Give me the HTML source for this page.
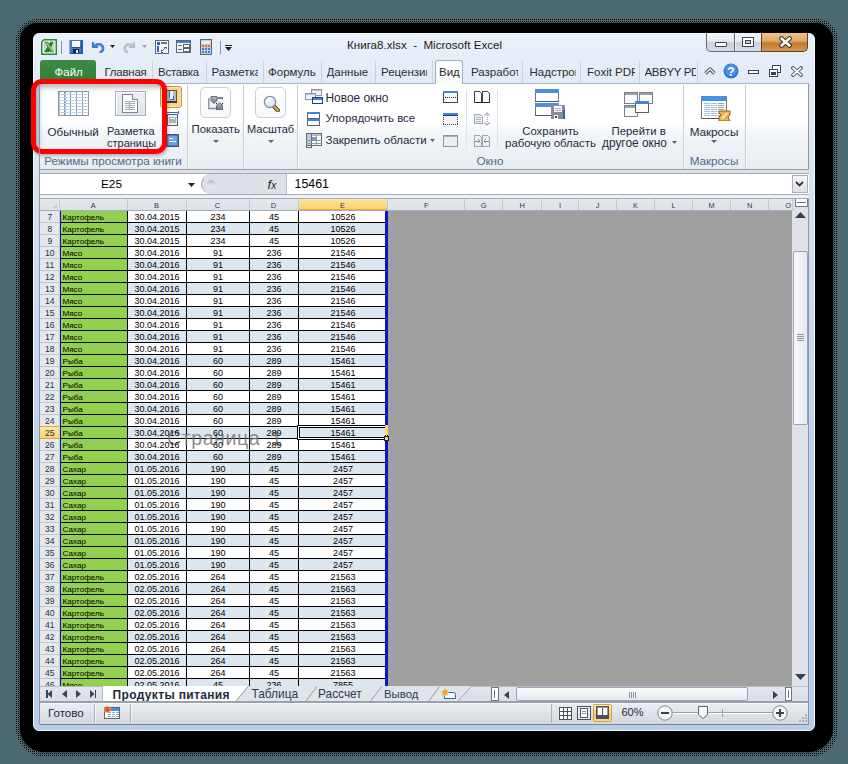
<!DOCTYPE html><html><head><meta charset="utf-8"><style>

*{box-sizing:border-box;margin:0;padding:0}
html,body{width:848px;height:764px;overflow:hidden}
body{position:relative;background:#4c6870;font-family:"Liberation Sans",sans-serif;color:#1e395b}
.ab{position:absolute}
.t{position:absolute;white-space:pre;line-height:1}

</style></head><body>
<svg class="ab" style="left:16px;top:19px" width="822" height="738" shape-rendering="crispEdges"><defs><pattern id="dots" width="2" height="2" patternUnits="userSpaceOnUse"><rect x="0" y="0" width="1" height="1" fill="#000"/></pattern><pattern id="chk" width="2" height="2" patternUnits="userSpaceOnUse"><rect x="0" y="0" width="1" height="1" fill="#000"/><rect x="1" y="1" width="1" height="1" fill="#000"/></pattern></defs><path d="M21 0H801A21 21 0 0 1 822 21V710A28 28 0 0 1 794 738H28A28 28 0 0 1 0 710V21A21 21 0 0 1 21 0Z" fill="url(#dots)" shape-rendering="geometricPrecision"/><path d="M21 2H799A19 19 0 0 1 818 21V708A26 26 0 0 1 792 734H30A26 26 0 0 1 2 708V21A19 19 0 0 1 21 2Z" fill="url(#chk)" opacity="0.5" shape-rendering="geometricPrecision"/></svg>
<div class="ab" style="left:20px;top:23px;width:813px;height:729px;border-radius:17px 17px 24px 24px;background:#000"></div>
<div class="ab" style="left:33px;top:33px;width:782px;height:698px;border-radius:6px;background:linear-gradient(#e9f0f9,#e0eaf6 8%,#cadcf0 35%,#bcd3eb 60%,#b7cee9);border:1px solid #f4f8fc"></div>
<svg class="ab" style="left:41px;top:39px" width="16" height="16" viewBox="0 0 16 16"><defs><linearGradient id="xg" x1="0" y1="0" x2="1" y2="0"><stop offset="0" stop-color="#c4c7ca"/><stop offset=".5" stop-color="#f4f4f4"/><stop offset="1" stop-color="#bfc2c5"/></linearGradient></defs><path d="M3 0.75H15.25V15.25H0.75V3Z" fill="#fff" stroke="#2b8a2e" stroke-width="1.5"/><rect x="2.6" y="2.6" width="10.8" height="10.8" fill="url(#xg)"/><path d="M3.5 2.8H7L13 13.2H9.5Z" fill="#1f7f2a"/><path d="M12.5 2.8H9.5L3.2 13.2H8.2Z" fill="#1f7f2a"/><path d="M5.3 3.5L12 12.6" stroke="#8edb4c" stroke-width="1.7"/></svg>
<div class="ab" style="left:61px;top:41px;width:1px;height:13px;background:#8a97a8"></div>
<svg class="ab" style="left:69px;top:40px" width="14" height="14" viewBox="0 0 14 14" shape-rendering="crispEdges"><rect x="0" y="0" width="14" height="14" fill="#3d7ad6"/><rect x="0" y="0" width="1" height="14" fill="#9aa6b6"/><rect x="12" y="0" width="2" height="14" fill="#2a5cb0"/><rect x="1" y="13" width="13" height="1" fill="#24509e"/><rect x="3" y="1" width="8" height="6" fill="#f6f8fb"/><rect x="3" y="7" width="9" height="1" fill="#1f4a9a"/><rect x="4" y="9" width="6" height="4" fill="#1b1d22"/><rect x="7" y="10" width="2" height="3" fill="#e6ecf3"/></svg>
<svg class="ab" style="left:91px;top:41px" width="14" height="12" viewBox="0 0 14 12"><path d="M2 1v5h5" fill="none" stroke="#3b7fd6" stroke-width="2.2"/><path d="M3 5.5C5 2.5 11 2 12 6.5c.6 3-1.5 4.5-3.5 5" fill="none" stroke="#3b7fd6" stroke-width="2.6"/></svg>
<svg class="ab" style="left:110px;top:45px" width="5" height="3" viewBox="0 0 5 3" shape-rendering="crispEdges"><path d="M0 0h5l-2.5 3z" fill="#202020" shape-rendering="geometricPrecision"/></svg>
<svg class="ab" style="left:123px;top:41px" width="13" height="12" viewBox="0 0 13 12"><path d="M11 1v5H6" fill="none" stroke="#b8bfc8" stroke-width="2.2"/><path d="M10 5.5C8 2.5 3 2 2 6.5c-.6 3 1.3 4.5 3 5" fill="none" stroke="#b8bfc8" stroke-width="2.6"/></svg>
<svg class="ab" style="left:142px;top:45px" width="5" height="3" viewBox="0 0 5 3" shape-rendering="crispEdges"><path d="M0 0h5l-2.5 3z" fill="#9aa3ad" shape-rendering="geometricPrecision"/></svg>
<svg class="ab" style="left:155px;top:40px" width="14" height="14" viewBox="0 0 14 14" shape-rendering="crispEdges"><rect x="0.5" y="0.5" width="13" height="13" fill="#f6f8fb" stroke="#5d6672"/><rect x="2" y="2" width="3" height="3" fill="#2f63b5"/><rect x="6" y="2" width="6" height="2" fill="#6c7682"/><rect x="2" y="6" width="2" height="6" fill="#2f63b5"/><path d="M6 12l5-5M9 7h2v2M6 10v2h2" stroke="#5d6672" fill="none"/></svg>
<svg class="ab" style="left:176px;top:40px" width="15" height="13" viewBox="0 0 15 13" shape-rendering="crispEdges"><rect x="0.5" y="0.5" width="14" height="12" fill="#f6f8fb" stroke="#5d6672"/><rect x="1" y="1" width="13" height="2" fill="#3f7fd0"/><rect x="2" y="5" width="4" height="1" fill="#5d6672"/><rect x="7" y="4" width="6" height="3" fill="#fff" stroke="#5d6672" stroke-width="1"/><rect x="2" y="9" width="4" height="1" fill="#5d6672"/><rect x="7" y="8" width="6" height="3" fill="#fff" stroke="#5d6672"/></svg>
<svg class="ab" style="left:200px;top:39px" width="12" height="16" viewBox="0 0 12 16" shape-rendering="crispEdges"><rect x="0.5" y="0.5" width="11" height="15" rx="1" fill="#c5ced8" stroke="#5b6572"/><rect x="2" y="2" width="8" height="3" fill="#e9eef4"/><rect x="2" y="6" width="2" height="2" fill="#e8662a"/><rect x="5" y="6" width="2" height="2" fill="#e8662a"/><rect x="8" y="6" width="2" height="2" fill="#e8662a"/><rect x="2" y="9" width="2" height="2" fill="#3b7fd6"/><rect x="5" y="9" width="2" height="2" fill="#3b7fd6"/><rect x="8" y="9" width="2" height="2" fill="#3b7fd6"/><rect x="2" y="12" width="2" height="2" fill="#3b7fd6"/><rect x="5" y="12" width="2" height="2" fill="#3b7fd6"/><rect x="8" y="12" width="2" height="2" fill="#3b7fd6"/></svg>
<div class="ab" style="left:220px;top:41px;width:1px;height:13px;background:#8a97a8"></div>
<svg class="ab" style="left:225px;top:44px" width="8" height="8" viewBox="0 0 8 8" shape-rendering="crispEdges"><rect x="0" y="1" width="7" height="1" fill="#202020"/><path d="M0 3h7l-3.5 4z" fill="#202020" shape-rendering="geometricPrecision"/></svg>
<div class="t" style="left:347px;top:39px;font-size:11.6px;color:#1a1a1a;font-weight:normal;">Книга8.xlsx  -  Microsoft Excel</div>
<div class="ab" style="left:706px;top:33px;width:56px;height:19px;border:1px solid #5e6a78;border-top:none;border-radius:0 0 0 5px;background:linear-gradient(#f2f5f9,#e6ebf1 45%,#c9d1db 55%,#d5dce4)"></div>
<div class="ab" style="left:734px;top:33px;width:1px;height:18px;background:#5e6a78"></div>
<div class="ab" style="left:735px;top:33px;width:1px;height:18px;background:rgba(255,255,255,.6)"></div>
<div class="ab" style="left:761px;top:33px;width:47px;height:19px;border:1px solid #6a3e1a;border-top:none;border-radius:0 0 5px 0;background:linear-gradient(#eec48c,#e3a860 45%,#c27b32 55%,#d49650)"></div>
<div class="ab" style="left:715px;top:42px;width:12px;height:5px;background:#fff;border:1px solid #3a4350;border-radius:1px"></div>
<svg class="ab" style="left:742px;top:37px" width="12" height="10" viewBox="0 0 12 10" shape-rendering="crispEdges"><rect x="0.5" y="0.5" width="11" height="9" fill="#fff" stroke="#3a4350"/><rect x="3.5" y="3.5" width="5" height="3" fill="#c9d0d8" stroke="#3a4350"/></svg>
<svg class="ab" style="left:779px;top:36px" width="13" height="12" viewBox="0 0 13 12"><path d="M2.5 2.5l8 7M10.5 2.5l-8 7" stroke="#3a3028" stroke-width="4.6" stroke-linecap="round"/><path d="M2.5 2.5l8 7M10.5 2.5l-8 7" stroke="#fff" stroke-width="2.6" stroke-linecap="round"/></svg>
<div class="ab" style="left:40px;top:60px;width:56px;height:24px;border-radius:3px 3px 0 0;background:linear-gradient(#3c8c45,#2e7d38)"></div>
<div class="t" style="left:54.5px;top:66.5px;font-size:11.5px;color:#fff;font-weight:normal;">Файл</div>
<div class="ab" style="left:104.5px;top:62px;width:60px;height:20px;overflow:hidden">
<div class="t" style="left:0;top:5px;font-size:11.5px;color:#2d2d2d;letter-spacing:-0.25px">Главная</div></div>
<div class="ab" style="left:152px;top:61px;width:1px;height:22px;background:#c9d3df"></div>
<div class="ab" style="left:158px;top:62px;width:60px;height:20px;overflow:hidden">
<div class="t" style="left:0;top:5px;font-size:11.5px;color:#2d2d2d;letter-spacing:-0.25px">Вставка</div></div>
<div class="ab" style="left:205.5px;top:61px;width:1px;height:22px;background:#c9d3df"></div>
<div class="ab" style="left:211.5px;top:62px;width:46.5px;height:20px;overflow:hidden">
<div class="t" style="left:0;top:5px;font-size:11.5px;color:#2d2d2d;letter-spacing:0">Разметка</div></div>
<div class="ab" style="left:263px;top:61px;width:1px;height:22px;background:#c9d3df"></div>
<div class="ab" style="left:268px;top:62px;width:48px;height:20px;overflow:hidden">
<div class="t" style="left:0;top:5px;font-size:11.5px;color:#2d2d2d;letter-spacing:0">Формулы</div></div>
<div class="ab" style="left:321px;top:61px;width:1px;height:22px;background:#c9d3df"></div>
<div class="ab" style="left:326.5px;top:62px;width:43.5px;height:20px;overflow:hidden">
<div class="t" style="left:0;top:5px;font-size:11.5px;color:#2d2d2d;letter-spacing:0">Данные</div></div>
<div class="ab" style="left:375px;top:61px;width:1px;height:22px;background:#c9d3df"></div>
<div class="ab" style="left:381px;top:62px;width:46px;height:20px;overflow:hidden">
<div class="t" style="left:0;top:5px;font-size:11.5px;color:#2d2d2d;letter-spacing:0">Рецензии</div></div>
<div class="ab" style="left:432px;top:61px;width:1px;height:22px;background:#c9d3df"></div>
<div class="ab" style="left:435px;top:60px;width:28px;height:24px;border:1px solid #9eacbd;border-bottom:none;border-radius:3px 3px 0 0;background:linear-gradient(#fff,#f9fbfd)"></div>
<div class="t" style="left:439px;top:67px;font-size:11.5px;color:#2d2d2d;font-weight:normal;">Вид</div>
<div class="ab" style="left:471px;top:62px;width:47px;height:20px;overflow:hidden">
<div class="t" style="left:0;top:5px;font-size:11.5px;color:#2d2d2d;letter-spacing:0">Разработчик</div></div>
<div class="ab" style="left:522px;top:61px;width:1px;height:22px;background:#c9d3df"></div>
<div class="ab" style="left:529.5px;top:62px;width:46.5px;height:20px;overflow:hidden">
<div class="t" style="left:0;top:5px;font-size:11.5px;color:#2d2d2d;letter-spacing:0">Надстройки</div></div>
<div class="ab" style="left:580px;top:61px;width:1px;height:22px;background:#c9d3df"></div>
<div class="ab" style="left:587px;top:62px;width:47.5px;height:20px;overflow:hidden">
<div class="t" style="left:0;top:5px;font-size:11.5px;color:#2d2d2d;letter-spacing:0">Foxit PDF</div></div>
<div class="ab" style="left:638.5px;top:61px;width:1px;height:22px;background:#c9d3df"></div>
<div class="ab" style="left:644.5px;top:62px;width:51.0px;height:20px;overflow:hidden">
<div class="t" style="left:0;top:5px;font-size:11.5px;color:#2d2d2d;letter-spacing:-0.35px">ABBYY PDF</div></div>
<div class="ab" style="left:696.5px;top:61px;width:1px;height:22px;background:#c9d3df"></div>
<svg class="ab" style="left:704px;top:67px" width="12" height="8" viewBox="0 0 12 8"><path d="M1.5 6.5l4.5-4.5 4.5 4.5" fill="none" stroke="#3a4350" stroke-width="3.2" stroke-linejoin="round"/><path d="M1.5 6.5l4.5-4.5 4.5 4.5" fill="none" stroke="#fff" stroke-width="1.3"/></svg>
<svg class="ab" style="left:723px;top:63px" width="16" height="16" viewBox="0 0 16 16"><circle cx="8" cy="8" r="7.5" fill="#2f76d2"/><circle cx="8" cy="7" r="6" fill="#4a90e2"/><text x="8" y="12.5" font-size="12" font-weight="bold" text-anchor="middle" fill="#fff" font-family="Liberation Sans">?</text></svg>
<div class="ab" style="left:748px;top:70px;width:11px;height:4px;background:#fff;border:1px solid #3a4350"></div>
<svg class="ab" style="left:769px;top:65px" width="12" height="12" viewBox="0 0 12 12" shape-rendering="crispEdges"><rect x="3.5" y="0.5" width="8" height="7" fill="#fff" stroke="#3a4350"/><rect x="0.5" y="4.5" width="8" height="7" fill="#fff" stroke="#3a4350"/><rect x="2" y="7" width="5" height="3" fill="#3a4350"/></svg>
<svg class="ab" style="left:791px;top:66px" width="12" height="11" viewBox="0 0 12 11"><path d="M2 2l8 7M10 2l-8 7" stroke="#3a4350" stroke-width="3.6" stroke-linecap="round"/><path d="M2 2l8 7M10 2l-8 7" stroke="#fff" stroke-width="1.8" stroke-linecap="round"/></svg>
<div class="ab" style="left:39px;top:83px;width:770px;height:87px;border:1px solid #a9b6c6;border-bottom:1px solid #96a0ac;background:linear-gradient(#ffffff,#ffffff 44%,#f3f5f8 58%,#edf0f4 78%,#e8ecf1)"></div>
<div class="ab" style="left:436px;top:83px;width:26px;height:1px;background:#fff"></div>
<div class="ab" style="left:186.5px;top:85px;width:1px;height:84px;background:#c5ccd5"></div>
<div class="ab" style="left:187.5px;top:86px;width:1px;height:82px;background:rgba(255,255,255,.8)"></div>
<div class="ab" style="left:242.5px;top:85px;width:1px;height:84px;background:#c5ccd5"></div>
<div class="ab" style="left:243.5px;top:86px;width:1px;height:82px;background:rgba(255,255,255,.8)"></div>
<div class="ab" style="left:297px;top:85px;width:1px;height:84px;background:#c5ccd5"></div>
<div class="ab" style="left:298px;top:86px;width:1px;height:82px;background:rgba(255,255,255,.8)"></div>
<div class="ab" style="left:682.5px;top:85px;width:1px;height:84px;background:#c5ccd5"></div>
<div class="ab" style="left:683.5px;top:86px;width:1px;height:82px;background:rgba(255,255,255,.8)"></div>
<div class="ab" style="left:745px;top:85px;width:1px;height:84px;background:#c5ccd5"></div>
<div class="ab" style="left:746px;top:86px;width:1px;height:82px;background:rgba(255,255,255,.8)"></div>
<div class="ab" style="left:466px;top:90px;width:1px;height:58px;background:#dde3ea"></div>
<div class="ab" style="left:497px;top:90px;width:1px;height:58px;background:#dde3ea"></div>
<div class="t" style="left:13.0px;top:155px;width:200px;text-align:center;font-size:11.7px;color:#4e6a8e;font-weight:normal;">Режимы просмотра книги</div>
<div class="t" style="left:390.0px;top:155px;width:200px;text-align:center;font-size:11.7px;color:#4e6a8e;font-weight:normal;">Окно</div>
<div class="t" style="left:614.0px;top:155px;width:200px;text-align:center;font-size:11.7px;color:#4e6a8e;font-weight:normal;">Макросы</div>
<svg class="ab" style="left:58px;top:91px" width="31" height="25" viewBox="0 0 31 25" shape-rendering="crispEdges"><rect x="0" y="0" width="31" height="25" fill="#8e98a6"/><rect x="1" y="1" width="5" height="2" fill="#fff"/><rect x="7" y="1" width="5" height="2" fill="#fff"/><rect x="13" y="1" width="5" height="2" fill="#fff"/><rect x="19" y="1" width="5" height="2" fill="#fff"/><rect x="25" y="1" width="5" height="2" fill="#fff"/><rect x="1" y="4" width="5" height="2" fill="#fff"/><rect x="7" y="4" width="5" height="2" fill="#fff"/><rect x="13" y="4" width="5" height="2" fill="#fff"/><rect x="19" y="4" width="5" height="2" fill="#fff"/><rect x="25" y="4" width="5" height="2" fill="#fff"/><rect x="1" y="7" width="5" height="2" fill="#fff"/><rect x="7" y="7" width="5" height="2" fill="#fff"/><rect x="13" y="7" width="5" height="2" fill="#fff"/><rect x="19" y="7" width="5" height="2" fill="#fff"/><rect x="25" y="7" width="5" height="2" fill="#fff"/><rect x="1" y="10" width="5" height="2" fill="#fff"/><rect x="7" y="10" width="5" height="2" fill="#fff"/><rect x="13" y="10" width="5" height="2" fill="#fff"/><rect x="19" y="10" width="5" height="2" fill="#fff"/><rect x="25" y="10" width="5" height="2" fill="#fff"/><rect x="1" y="13" width="5" height="2" fill="#fff"/><rect x="7" y="13" width="5" height="2" fill="#fff"/><rect x="13" y="13" width="5" height="2" fill="#fff"/><rect x="19" y="13" width="5" height="2" fill="#fff"/><rect x="25" y="13" width="5" height="2" fill="#fff"/><rect x="1" y="16" width="5" height="2" fill="#fff"/><rect x="7" y="16" width="5" height="2" fill="#fff"/><rect x="13" y="16" width="5" height="2" fill="#fff"/><rect x="19" y="16" width="5" height="2" fill="#fff"/><rect x="25" y="16" width="5" height="2" fill="#fff"/><rect x="1" y="19" width="5" height="2" fill="#fff"/><rect x="7" y="19" width="5" height="2" fill="#fff"/><rect x="13" y="19" width="5" height="2" fill="#fff"/><rect x="19" y="19" width="5" height="2" fill="#fff"/><rect x="25" y="19" width="5" height="2" fill="#fff"/><rect x="1" y="22" width="5" height="2" fill="#fff"/><rect x="7" y="22" width="5" height="2" fill="#fff"/><rect x="13" y="22" width="5" height="2" fill="#fff"/><rect x="19" y="22" width="5" height="2" fill="#fff"/><rect x="25" y="22" width="5" height="2" fill="#fff"/><rect x="1" y="1" width="1" height="23" fill="#9cc0e8"/><rect x="7" y="1" width="1" height="23" fill="#9cc0e8"/><rect x="1" y="3" width="29" height="1" fill="#b8d3f0"/><rect x="1" y="6" width="29" height="1" fill="#b8d3f0"/><rect x="1" y="9" width="29" height="1" fill="#b8d3f0"/><rect x="1" y="12" width="29" height="1" fill="#b8d3f0"/><rect x="1" y="15" width="29" height="1" fill="#b8d3f0"/><rect x="1" y="18" width="29" height="1" fill="#b8d3f0"/><rect x="1" y="21" width="29" height="1" fill="#b8d3f0"/></svg>
<div class="ab" style="left:115px;top:91px;width:31px;height:25px;border:1px solid #a9b1bb;background:linear-gradient(#eef1f4,#dfe4ea);box-shadow:inset 1px 1px 0 #fff"></div>
<svg class="ab" style="left:122px;top:94px" width="16" height="19" viewBox="0 0 16 19" shape-rendering="crispEdges"><path d="M0.5 0.5h10l5 5v13h-15z" fill="#fbfcfd" stroke="#7c8591"/><path d="M10.5 0.5v5h5" fill="#e1e5ea" stroke="#7c8591"/><rect x="3" y="7" width="10" height="1" fill="#a2aab4"/><rect x="3" y="9" width="10" height="1" fill="#a2aab4"/><rect x="3" y="11" width="10" height="1" fill="#a2aab4"/><rect x="3" y="13" width="10" height="1" fill="#a2aab4"/><rect x="3" y="15" width="10" height="1" fill="#a2aab4"/><rect x="7" y="7" width="1" height="9" fill="#a2aab4"/></svg>
<div class="t" style="left:47.5px;top:125.5px;font-size:11.6px;color:#1f2b3d;font-weight:normal;">Обычный</div>
<div class="t" style="left:107px;top:125.5px;font-size:11px;color:#1f2b3d;font-weight:normal;">Разметка</div>
<div class="t" style="left:107px;top:138px;font-size:11px;color:#1f2b3d;font-weight:normal;">страницы</div>
<div class="ab" style="left:160px;top:86px;width:22px;height:21.5px;border:1px solid #c99448;border-radius:3px;background:#fdd57c;box-shadow:inset 0 0 0 1px #fee4a6"></div>
<svg class="ab" style="left:166px;top:90px" width="11" height="13" viewBox="0 0 11 13" shape-rendering="crispEdges"><rect x="0" y="0" width="11" height="13" fill="#4e5664"/><rect x="1" y="1" width="9" height="10" fill="#b4bcc6"/><rect x="4" y="1" width="3" height="9" fill="#f4f7fa"/><rect x="3" y="1" width="1" height="7" fill="#2c64c8"/><rect x="7" y="6" width="1" height="4" fill="#2c64c8"/><rect x="4" y="9" width="3" height="1" fill="#2c64c8"/><rect x="1" y="11" width="10" height="2" fill="#343b46"/></svg>
<svg class="ab" style="left:166px;top:111px" width="13" height="15" viewBox="0 0 13 15" shape-rendering="crispEdges"><rect x="0" y="0" width="1" height="3" fill="#2c6bd0"/><rect x="12" y="0" width="1" height="3" fill="#2c6bd0"/><rect x="0" y="1" width="13" height="1" fill="#2c6bd0"/><rect x="1.5" y="3.5" width="10" height="11" fill="#eef1f4" stroke="#59616c"/><rect x="3" y="6" width="7" height="6" fill="#aab2bc"/><rect x="4" y="7" width="5" height="1" fill="#fff"/></svg>
<svg class="ab" style="left:166px;top:134px" width="13" height="13" viewBox="0 0 13 13" shape-rendering="crispEdges"><rect x="0.5" y="0.5" width="12" height="12" fill="#3f7fd0" stroke="#4a525e"/><rect x="2" y="2" width="9" height="9" fill="#6aa2e6"/><rect x="3" y="4" width="4" height="1" fill="#fff"/><rect x="3" y="7" width="7" height="1" fill="#fff"/></svg>
<div class="ab" style="left:200px;top:87px;width:31px;height:31px;border:1.3px solid #c9d0d8;border-radius:5px;background:linear-gradient(#fff,#f6f8fa)"></div>
<svg class="ab" style="left:208px;top:96px" width="15" height="14" viewBox="0 0 15 14"><defs><linearGradient id="sh" x1="0" y1="0" x2="0" y2="1"><stop offset="0" stop-color="#b8bcc2"/><stop offset="1" stop-color="#6e747c"/></linearGradient></defs><rect x="1" y="1" width="14" height="11" fill="#eef3fa"/><path d="M0.8 2v10.5H9" fill="none" stroke="#8a9099" stroke-width="1.4"/><path d="M3 0.5h6v4l-3 3-3-3z" fill="url(#sh)" stroke="#5f656d" stroke-width="0.9"/><rect x="9.5" y="1" width="5.5" height="2" fill="#7a8088"/><path d="M8.5 13.8v-3.8l3.2-3.2 3.2 3.2v3.8z" fill="url(#sh)" stroke="#4f555d" stroke-width="0.9"/><rect x="8" y="7" width="1" height="1.2" fill="#222"/><rect x="14" y="7" width="1" height="1.2" fill="#222"/></svg>
<div class="t" style="left:191.5px;top:123.5px;font-size:11.4px;color:#1f2b3d;font-weight:normal;">Показать</div>
<svg class="ab" style="left:213px;top:140px" width="6" height="3" viewBox="0 0 6 3" shape-rendering="crispEdges"><path d="M0 0h6l-3 3z" fill="#5a6470" shape-rendering="geometricPrecision"/></svg>
<div class="ab" style="left:255px;top:87px;width:31px;height:31px;border:1.3px solid #c9d0d8;border-radius:5px;background:linear-gradient(#fff,#f6f8fa)"></div>
<svg class="ab" style="left:262px;top:94px" width="18" height="18" viewBox="0 0 18 18"><defs><linearGradient id="lg" x1="0" y1="0" x2="1" y2="1"><stop offset="0" stop-color="#ffffff"/><stop offset="1" stop-color="#c9def4"/></linearGradient></defs><path d="M12 12.5l3.8 3.8" stroke="#3a3020" stroke-width="4" stroke-linecap="square"/><path d="M12 12.5l3.8 3.8" stroke="#e0a838" stroke-width="2.4" stroke-linecap="square"/><circle cx="8" cy="8" r="5.6" fill="url(#lg)" stroke="#858b94" stroke-width="1.3"/></svg>
<div class="t" style="left:247px;top:123.5px;font-size:11px;color:#1f2b3d;font-weight:normal;">Масштаб</div>
<svg class="ab" style="left:268px;top:140px" width="6" height="3" viewBox="0 0 6 3" shape-rendering="crispEdges"><path d="M0 0h6l-3 3z" fill="#5a6470" shape-rendering="geometricPrecision"/></svg>
<svg class="ab" style="left:305px;top:89px" width="18" height="15" viewBox="0 0 18 15" shape-rendering="crispEdges"><rect x="6.5" y="0.5" width="10" height="6" fill="#f2f4f6" stroke="#8e96a0"/><rect x="7" y="1" width="9" height="1" fill="#b9c0c8"/><rect x="0.5" y="4.5" width="10" height="6" fill="#eef3f9" stroke="#8e96a0"/><rect x="1" y="5" width="9" height="1" fill="#a9c6ea"/><rect x="7.5" y="8.5" width="10" height="6" fill="#fff" stroke="#1d3f7a"/><rect x="8" y="9" width="9" height="2" fill="#3f86e0"/></svg>
<div class="t" style="left:325.5px;top:92.6px;font-size:11.9px;color:#1f2b3d;font-weight:normal;">Новое окно</div>
<svg class="ab" style="left:307px;top:112px" width="13" height="14" viewBox="0 0 13 14" shape-rendering="crispEdges"><rect x="0.5" y="0.5" width="12" height="6" fill="#fff" stroke="#59616c"/><rect x="0" y="0" width="13" height="2" fill="#3f86e0"/><rect x="0.5" y="7.5" width="12" height="6" fill="#fff" stroke="#59616c"/><rect x="0" y="7" width="13" height="2" fill="#3f86e0"/></svg>
<div class="t" style="left:325.5px;top:112.7px;font-size:11.5px;color:#1f2b3d;font-weight:normal;">Упорядочить все</div>
<svg class="ab" style="left:306px;top:133px" width="16" height="15" viewBox="0 0 16 15" shape-rendering="crispEdges"><rect x="0.5" y="0.5" width="15" height="12" fill="#fff" stroke="#5f6772"/><rect x="1" y="1" width="14" height="2" fill="#b9c0c8"/><rect x="1" y="1" width="4" height="11" fill="#c7ccd3"/><rect x="6" y="4" width="4" height="3" fill="#6a9ee0"/><rect x="5" y="0" width="1" height="13" fill="#5f6772"/><rect x="10" y="0" width="1" height="13" fill="#8e96a0"/><rect x="0" y="7" width="16" height="1" fill="#8e96a0"/><rect x="0" y="10" width="16" height="1" fill="#8e96a0"/><rect x="0.5" y="12.5" width="5" height="2" fill="#fff" stroke="#5f6772"/></svg>
<div class="t" style="left:325.5px;top:134.5px;font-size:11.5px;color:#1f2b3d;font-weight:normal;">Закрепить области</div>
<svg class="ab" style="left:430px;top:139px" width="5" height="3" viewBox="0 0 5 3" shape-rendering="crispEdges"><path d="M0 0h5l-2.5 3z" fill="#5a6470" shape-rendering="geometricPrecision"/></svg>
<svg class="ab" style="left:443px;top:91px" width="15" height="12" viewBox="0 0 15 12" shape-rendering="crispEdges"><rect x="0.5" y="0.5" width="14" height="11" fill="#f7f9fb" stroke="#3d4550"/><rect x="0" y="0" width="15" height="2" fill="#3f86e0"/><rect x="2" y="6" width="1" height="1" fill="#1d2530"/><rect x="4" y="6" width="1" height="1" fill="#1d2530"/><rect x="6" y="6" width="1" height="1" fill="#1d2530"/><rect x="8" y="6" width="1" height="1" fill="#1d2530"/><rect x="10" y="6" width="1" height="1" fill="#1d2530"/><rect x="12" y="6" width="1" height="1" fill="#1d2530"/></svg>
<svg class="ab" style="left:443px;top:113px" width="15" height="12" viewBox="0 0 15 12" shape-rendering="crispEdges"><rect x="1" y="2" width="13" height="9" fill="#f3f5f8"/><rect x="0" y="0" width="15" height="3" fill="#3f86e0"/><rect x="0" y="2" width="15" height="1" fill="#1d3f7a"/><rect x="0" y="11" width="1" height="1" fill="#3d4550"/><rect x="2" y="11" width="1" height="1" fill="#3d4550"/><rect x="4" y="11" width="1" height="1" fill="#3d4550"/><rect x="6" y="11" width="1" height="1" fill="#3d4550"/><rect x="8" y="11" width="1" height="1" fill="#3d4550"/><rect x="10" y="11" width="1" height="1" fill="#3d4550"/><rect x="12" y="11" width="1" height="1" fill="#3d4550"/><rect x="14" y="11" width="1" height="1" fill="#3d4550"/><rect x="0" y="4" width="1" height="1" fill="#3d4550"/><rect x="14" y="4" width="1" height="1" fill="#3d4550"/><rect x="0" y="6" width="1" height="1" fill="#3d4550"/><rect x="14" y="6" width="1" height="1" fill="#3d4550"/><rect x="0" y="8" width="1" height="1" fill="#3d4550"/><rect x="14" y="8" width="1" height="1" fill="#3d4550"/><rect x="0" y="10" width="1" height="1" fill="#3d4550"/><rect x="14" y="10" width="1" height="1" fill="#3d4550"/></svg>
<svg class="ab" style="left:443px;top:135px" width="15" height="12" viewBox="0 0 15 12" shape-rendering="crispEdges"><rect x="0.5" y="0.5" width="14" height="11" fill="#eceff2" stroke="#8e96a0"/><rect x="1" y="1" width="13" height="1" fill="#a9b0b8"/></svg>
<svg class="ab" style="left:474px;top:91px" width="16" height="12" viewBox="0 0 16 12" shape-rendering="crispEdges"><path d="M0.5 0.5h5l2 2v9h-7z" fill="#f7f9fb" stroke="#3d4550"/><path d="M8.5 0.5h5l2 2v9h-7z" fill="#f7f9fb" stroke="#3d4550"/><rect x="1" y="11" width="7" height="1" fill="#1d2530"/><rect x="9" y="11" width="7" height="1" fill="#1d2530"/></svg>
<svg class="ab" style="left:474px;top:112px" width="16" height="14" viewBox="0 0 16 14" shape-rendering="crispEdges"><path d="M0.5 2.5h6l2 2v7h-8z" fill="#eceff2" stroke="#a0a7b0"/><rect x="2" y="5" width="5" height="1" fill="#b0b7bf"/><rect x="2" y="7" width="5" height="1" fill="#b0b7bf"/><rect x="2" y="9" width="5" height="1" fill="#b0b7bf"/><path d="M13 3v8" stroke="#a0a7b0" stroke-dasharray="1 1"/><path d="M10.5 3.5l2.5-2.5 2.5 2.5M10.5 10.5l2.5 2.5 2.5-2.5" fill="none" stroke="#a0a7b0" stroke-width="1.2" shape-rendering="geometricPrecision"/></svg>
<svg class="ab" style="left:474px;top:135px" width="16" height="12" viewBox="0 0 16 12" shape-rendering="crispEdges"><path d="M0.5 0.5h5l2 2v9h-7z" fill="#eceff2" stroke="#a0a7b0"/><path d="M8.5 0.5h5l2 2v9h-7z" fill="#eceff2" stroke="#a0a7b0"/><path d="M1 6h5M4 4l2 2-2 2M15 6h-5M12 4l-2 2 2 2" fill="none" stroke="#8a929c"/></svg>
<svg class="ab" style="left:535px;top:89px" width="31" height="30" viewBox="0 0 31 30" shape-rendering="crispEdges"><rect x="0.5" y="0.5" width="23" height="12" fill="#fff" stroke="#6b7480"/><rect x="0" y="0" width="24" height="4" fill="#4a90e2"/><rect x="0" y="12" width="24" height="1" fill="#4f5762"/><rect x="0.5" y="14.5" width="23" height="12" fill="#fff" stroke="#6b7480"/><rect x="0" y="14" width="24" height="4" fill="#4a90e2"/><rect x="0" y="26" width="24" height="1" fill="#4f5762"/><rect x="16" y="16" width="14" height="14" fill="#8c8a94"/><rect x="19" y="17" width="8" height="6" fill="#fafbfc"/><rect x="20" y="19" width="6" height="1" fill="#aab"/><rect x="20" y="21" width="6" height="1" fill="#aab"/><rect x="19" y="26" width="4" height="4" fill="#fff"/><rect x="20" y="27" width="2" height="2" fill="#24427e"/><rect x="28" y="21" width="2" height="9" fill="#2c5fb8"/></svg>
<div class="t" style="left:450.5px;top:125.5px;width:200px;text-align:center;font-size:11.4px;color:#1f2b3d;font-weight:normal;">Сохранить</div>
<div class="t" style="left:450.5px;top:138px;width:200px;text-align:center;font-size:11.4px;color:#1f2b3d;font-weight:normal;">рабочую область</div>
<svg class="ab" style="left:624px;top:92px" width="30" height="26" viewBox="0 0 30 26" shape-rendering="crispEdges"><rect x="0.5" y="0.5" width="13" height="11" fill="#fafbfc" stroke="#7a7f88"/><rect x="1" y="1" width="12" height="2" fill="#9a9fa8"/><rect x="15.5" y="0.5" width="13" height="11" fill="#fafbfc" stroke="#7a7f88"/><rect x="16" y="1" width="12" height="2" fill="#9a9fa8"/><rect x="0.5" y="13.5" width="13" height="11" fill="#fafbfc" stroke="#7a7f88"/><rect x="1" y="14" width="12" height="2" fill="#9a9fa8"/><rect x="11.5" y="9.5" width="13" height="11" fill="#fff" stroke="#59616c"/><rect x="11" y="9" width="14" height="3" fill="#3f86e0"/></svg>
<div class="t" style="left:611.5px;top:125.5px;font-size:11.4px;color:#1f2b3d;font-weight:normal;">Перейти в</div>
<div class="t" style="left:602px;top:138px;font-size:11.9px;color:#1f2b3d;font-weight:normal;">другое окно</div>
<svg class="ab" style="left:672px;top:141px" width="5" height="3" viewBox="0 0 5 3" shape-rendering="crispEdges"><path d="M0 0h5l-2.5 3z" fill="#5a6470" shape-rendering="geometricPrecision"/></svg>
<svg class="ab" style="left:701px;top:96px" width="30" height="25" viewBox="0 0 30 25" shape-rendering="crispEdges"><rect x="0.5" y="0.5" width="25" height="22" fill="#fff" stroke="#6b7480"/><rect x="0" y="0" width="26" height="5" fill="#4a90e2"/><rect x="0" y="22" width="26" height="1" fill="#4f5762"/><rect x="3" y="7" width="6" height="1" fill="#9fbde6"/><rect x="10" y="7" width="6" height="1" fill="#9fbde6"/><rect x="17" y="7" width="6" height="1" fill="#9a9fa8"/><rect x="3" y="9" width="6" height="1" fill="#9fbde6"/><rect x="10" y="9" width="6" height="1" fill="#9fbde6"/><rect x="17" y="9" width="6" height="1" fill="#9a9fa8"/><rect x="3" y="11" width="6" height="1" fill="#9fbde6"/><rect x="10" y="11" width="6" height="1" fill="#9fbde6"/><rect x="17" y="11" width="6" height="1" fill="#9a9fa8"/><rect x="3" y="13" width="6" height="1" fill="#9fbde6"/><rect x="10" y="13" width="6" height="1" fill="#9fbde6"/><rect x="17" y="13" width="6" height="1" fill="#9a9fa8"/><rect x="3" y="15" width="6" height="1" fill="#9fbde6"/><rect x="10" y="15" width="6" height="1" fill="#9fbde6"/><rect x="17" y="15" width="6" height="1" fill="#9a9fa8"/><rect x="3" y="17" width="6" height="1" fill="#9fbde6"/><rect x="10" y="17" width="6" height="1" fill="#9fbde6"/><rect x="17" y="17" width="6" height="1" fill="#9a9fa8"/><rect x="3" y="19" width="6" height="1" fill="#9fbde6"/><rect x="10" y="19" width="6" height="1" fill="#9fbde6"/><rect x="17" y="19" width="6" height="1" fill="#9a9fa8"/><path d="M18 15h11v4l-2 2 2 4H18v-4l2-2-2-2z" fill="#e9b44a" stroke="#9a5a14" shape-rendering="geometricPrecision"/><path d="M21 23l5-6" stroke="#fff6c0" stroke-width="1.5" shape-rendering="geometricPrecision"/></svg>
<div class="t" style="left:614.0px;top:125.5px;width:200px;text-align:center;font-size:11.7px;color:#1f2b3d;font-weight:normal;">Макросы</div>
<svg class="ab" style="left:711px;top:140px" width="6" height="3" viewBox="0 0 6 3" shape-rendering="crispEdges"><path d="M0 0h6l-3 3z" fill="#5a6470" shape-rendering="geometricPrecision"/></svg>
<div class="ab" style="left:40px;top:199px;width:752px;height:11px;background:linear-gradient(#e4e7ec,#dde1e6)"></div>
<div class="ab" style="left:40px;top:210px;width:752px;height:1px;background:#9eb0c4"></div>
<svg class="ab" style="left:53px;top:204px" width="4" height="4" viewBox="0 0 4 4" shape-rendering="crispEdges"><path d="M4 0v4H0z" fill="#c3c8ce" shape-rendering="geometricPrecision"/></svg>
<div class="ab" style="left:298px;top:198px;width:89px;height:12px;background:linear-gradient(#fde6a6,#fbd16e);border-bottom:1px solid #f2a63a"></div>
<div class="ab" style="left:127px;top:198px;width:1px;height:12px;background:#c2c8cf"></div>
<div class="t" style="left:-6.75px;top:201.5px;width:200px;text-align:center;font-size:7.4px;color:#223a58;font-weight:normal;">A</div>
<div class="ab" style="left:186px;top:198px;width:1px;height:12px;background:#c2c8cf"></div>
<div class="t" style="left:56.5px;top:201.5px;width:200px;text-align:center;font-size:7.4px;color:#223a58;font-weight:normal;">B</div>
<div class="ab" style="left:249px;top:198px;width:1px;height:12px;background:#c2c8cf"></div>
<div class="t" style="left:117.5px;top:201.5px;width:200px;text-align:center;font-size:7.4px;color:#223a58;font-weight:normal;">C</div>
<div class="ab" style="left:298px;top:198px;width:1px;height:12px;background:#c2c8cf"></div>
<div class="t" style="left:173.5px;top:201.5px;width:200px;text-align:center;font-size:7.4px;color:#223a58;font-weight:normal;">D</div>
<div class="ab" style="left:387px;top:198px;width:1px;height:12px;background:#c2c8cf"></div>
<div class="t" style="left:242.5px;top:201.5px;width:200px;text-align:center;font-size:7.4px;color:#223a58;font-weight:normal;">E</div>
<div class="ab" style="left:464px;top:198px;width:1px;height:12px;background:#c2c8cf"></div>
<div class="t" style="left:326.25px;top:201.5px;width:200px;text-align:center;font-size:7.4px;color:#223a58;font-weight:normal;">F</div>
<div class="ab" style="left:502px;top:198px;width:1px;height:12px;background:#c2c8cf"></div>
<div class="t" style="left:383.6px;top:201.5px;width:200px;text-align:center;font-size:7.4px;color:#223a58;font-weight:normal;">G</div>
<div class="ab" style="left:541px;top:198px;width:1px;height:12px;background:#c2c8cf"></div>
<div class="t" style="left:422.15px;top:201.5px;width:200px;text-align:center;font-size:7.4px;color:#223a58;font-weight:normal;">H</div>
<div class="ab" style="left:578px;top:198px;width:1px;height:12px;background:#c2c8cf"></div>
<div class="t" style="left:460.1px;top:201.5px;width:200px;text-align:center;font-size:7.4px;color:#223a58;font-weight:normal;">I</div>
<div class="ab" style="left:616px;top:198px;width:1px;height:12px;background:#c2c8cf"></div>
<div class="t" style="left:497.6px;top:201.5px;width:200px;text-align:center;font-size:7.4px;color:#223a58;font-weight:normal;">J</div>
<div class="ab" style="left:654px;top:198px;width:1px;height:12px;background:#c2c8cf"></div>
<div class="t" style="left:535.55px;top:201.5px;width:200px;text-align:center;font-size:7.4px;color:#223a58;font-weight:normal;">K</div>
<div class="ab" style="left:692px;top:198px;width:1px;height:12px;background:#c2c8cf"></div>
<div class="t" style="left:573.5px;top:201.5px;width:200px;text-align:center;font-size:7.4px;color:#223a58;font-weight:normal;">L</div>
<div class="ab" style="left:730px;top:198px;width:1px;height:12px;background:#c2c8cf"></div>
<div class="t" style="left:611.65px;top:201.5px;width:200px;text-align:center;font-size:7.4px;color:#223a58;font-weight:normal;">M</div>
<div class="ab" style="left:768px;top:198px;width:1px;height:12px;background:#c2c8cf"></div>
<div class="t" style="left:649.75px;top:201.5px;width:200px;text-align:center;font-size:7.4px;color:#223a58;font-weight:normal;">N</div>
<div class="ab" style="left:792px;top:198px;width:1px;height:12px;background:#c2c8cf"></div>
<div class="t" style="left:688.0px;top:201.5px;width:200px;text-align:center;font-size:7.4px;color:#223a58;font-weight:normal;">O</div>
<div class="ab" style="left:59px;top:198px;width:1px;height:12px;background:#c2c8cf"></div>
<div class="ab" style="left:40px;top:211px;width:20px;height:475px;background:#e4e7ec"></div>
<div class="ab" style="left:59px;top:211px;width:1px;height:475px;background:#c2c8cf"></div>
<div class="ab" style="left:388px;top:211px;width:404px;height:475px;background:#a0a0a0"></div>
<div class="ab" style="left:40px;top:211px;width:752px;height:475px;overflow:hidden">
<div class="ab" style="left:21px;top:0px;width:66px;height:475px;background:#92d050"></div>
<div class="ab" style="left:88px;top:0px;width:258px;height:475px;background:#fff"></div>
<div class="ab" style="left:88px;top:12px;width:258px;height:11px;background:#dce6f1"></div>
<div class="ab" style="left:88px;top:48px;width:258px;height:11px;background:#dce6f1"></div>
<div class="ab" style="left:88px;top:72px;width:258px;height:11px;background:#dce6f1"></div>
<div class="ab" style="left:88px;top:96px;width:258px;height:11px;background:#dce6f1"></div>
<div class="ab" style="left:88px;top:120px;width:258px;height:11px;background:#dce6f1"></div>
<div class="ab" style="left:88px;top:144px;width:258px;height:11px;background:#dce6f1"></div>
<div class="ab" style="left:88px;top:168px;width:258px;height:11px;background:#dce6f1"></div>
<div class="ab" style="left:88px;top:192px;width:258px;height:11px;background:#dce6f1"></div>
<div class="ab" style="left:88px;top:216px;width:258px;height:11px;background:#dce6f1"></div>
<div class="ab" style="left:88px;top:240px;width:258px;height:11px;background:#dce6f1"></div>
<div class="ab" style="left:88px;top:252px;width:258px;height:11px;background:#dce6f1"></div>
<div class="ab" style="left:88px;top:276px;width:258px;height:11px;background:#dce6f1"></div>
<div class="ab" style="left:88px;top:300px;width:258px;height:11px;background:#dce6f1"></div>
<div class="ab" style="left:88px;top:324px;width:258px;height:11px;background:#dce6f1"></div>
<div class="ab" style="left:88px;top:348px;width:258px;height:11px;background:#dce6f1"></div>
<div class="ab" style="left:88px;top:372px;width:258px;height:11px;background:#dce6f1"></div>
<div class="ab" style="left:88px;top:396px;width:258px;height:11px;background:#dce6f1"></div>
<div class="ab" style="left:88px;top:420px;width:258px;height:11px;background:#dce6f1"></div>
<div class="ab" style="left:88px;top:444px;width:258px;height:11px;background:#dce6f1"></div>
<div class="ab" style="left:88px;top:468px;width:258px;height:11px;background:#dce6f1"></div>
<div class="ab" style="left:20px;top:0px;width:327px;height:475px;background:repeating-linear-gradient(transparent 0 11px,#000 11px 12px)"></div>
<div class="ab" style="left:0px;top:0px;width:19px;height:475px;background:repeating-linear-gradient(transparent 0 11px,#c2c8cf 11px 12px)"></div>
<div class="ab" style="left:0px;top:215px;width:19px;height:13px;background:linear-gradient(#fde6a6,#fbd16e);border-top:1px solid #e3a44e;border-bottom:1px solid #e3a44e"></div>
<div class="ab" style="left:87px;top:0px;width:1px;height:475px;background:#000"></div>
<div class="ab" style="left:146px;top:0px;width:1px;height:475px;background:#000"></div>
<div class="ab" style="left:209px;top:0px;width:1px;height:475px;background:#000"></div>
<div class="ab" style="left:258px;top:0px;width:1px;height:475px;background:#000"></div>
<div class="ab" style="left:20px;top:0px;width:1px;height:475px;background:#1010c8"></div>
<div class="ab" style="left:345px;top:0px;width:3px;height:475px;background:#0a14c8"></div>
<div class="t" style="left:127px;top:218.2px;font-size:19.6px;color:rgba(120,120,120,.85);letter-spacing:0.55px">Страница</div>
<div class="t" style="left:231px;top:218.2px;font-size:19.6px;color:rgba(120,120,120,.85);">1</div>
<div class="t" style="left:-0.20000000000000284px;top:2.1999999999999886px;width:20px;text-align:center;font-size:8.6px;color:#2a3240;">7</div>
<div class="t" style="left:22.5px;top:2.8000000000000114px;font-size:8.1px;color:#000;">Картофель</div>
<div class="t" style="left:87.0px;top:2.1999999999999886px;width:60px;text-align:center;font-size:9px;color:#000;">30.04.2015</div>
<div class="t" style="left:153.0px;top:2.1999999999999886px;width:50px;text-align:center;font-size:9px;color:#000;">234</div>
<div class="t" style="left:214.0px;top:2.1999999999999886px;width:40px;text-align:center;font-size:9px;color:#000;">45</div>
<div class="t" style="left:273.0px;top:2.1999999999999886px;width:60px;text-align:center;font-size:9px;color:#000;">10526</div>
<div class="t" style="left:-0.20000000000000284px;top:14.199999999999989px;width:20px;text-align:center;font-size:8.6px;color:#2a3240;">8</div>
<div class="t" style="left:22.5px;top:14.800000000000011px;font-size:8.1px;color:#000;">Картофель</div>
<div class="t" style="left:87.0px;top:14.199999999999989px;width:60px;text-align:center;font-size:9px;color:#000;">30.04.2015</div>
<div class="t" style="left:153.0px;top:14.199999999999989px;width:50px;text-align:center;font-size:9px;color:#000;">234</div>
<div class="t" style="left:214.0px;top:14.199999999999989px;width:40px;text-align:center;font-size:9px;color:#000;">45</div>
<div class="t" style="left:273.0px;top:14.199999999999989px;width:60px;text-align:center;font-size:9px;color:#000;">10526</div>
<div class="t" style="left:-0.20000000000000284px;top:26.19999999999999px;width:20px;text-align:center;font-size:8.6px;color:#2a3240;">9</div>
<div class="t" style="left:22.5px;top:26.80000000000001px;font-size:8.1px;color:#000;">Картофель</div>
<div class="t" style="left:87.0px;top:26.19999999999999px;width:60px;text-align:center;font-size:9px;color:#000;">30.04.2015</div>
<div class="t" style="left:153.0px;top:26.19999999999999px;width:50px;text-align:center;font-size:9px;color:#000;">234</div>
<div class="t" style="left:214.0px;top:26.19999999999999px;width:40px;text-align:center;font-size:9px;color:#000;">45</div>
<div class="t" style="left:273.0px;top:26.19999999999999px;width:60px;text-align:center;font-size:9px;color:#000;">10526</div>
<div class="t" style="left:-0.20000000000000284px;top:38.19999999999999px;width:20px;text-align:center;font-size:8.6px;color:#2a3240;">10</div>
<div class="t" style="left:22.5px;top:38.80000000000001px;font-size:8.1px;color:#000;">Мясо</div>
<div class="t" style="left:87.0px;top:38.19999999999999px;width:60px;text-align:center;font-size:9px;color:#000;">30.04.2016</div>
<div class="t" style="left:153.0px;top:38.19999999999999px;width:50px;text-align:center;font-size:9px;color:#000;">91</div>
<div class="t" style="left:214.0px;top:38.19999999999999px;width:40px;text-align:center;font-size:9px;color:#000;">236</div>
<div class="t" style="left:273.0px;top:38.19999999999999px;width:60px;text-align:center;font-size:9px;color:#000;">21546</div>
<div class="t" style="left:-0.20000000000000284px;top:50.19999999999999px;width:20px;text-align:center;font-size:8.6px;color:#2a3240;">11</div>
<div class="t" style="left:22.5px;top:50.80000000000001px;font-size:8.1px;color:#000;">Мясо</div>
<div class="t" style="left:87.0px;top:50.19999999999999px;width:60px;text-align:center;font-size:9px;color:#000;">30.04.2016</div>
<div class="t" style="left:153.0px;top:50.19999999999999px;width:50px;text-align:center;font-size:9px;color:#000;">91</div>
<div class="t" style="left:214.0px;top:50.19999999999999px;width:40px;text-align:center;font-size:9px;color:#000;">236</div>
<div class="t" style="left:273.0px;top:50.19999999999999px;width:60px;text-align:center;font-size:9px;color:#000;">21546</div>
<div class="t" style="left:-0.20000000000000284px;top:62.19999999999999px;width:20px;text-align:center;font-size:8.6px;color:#2a3240;">12</div>
<div class="t" style="left:22.5px;top:62.80000000000001px;font-size:8.1px;color:#000;">Мясо</div>
<div class="t" style="left:87.0px;top:62.19999999999999px;width:60px;text-align:center;font-size:9px;color:#000;">30.04.2016</div>
<div class="t" style="left:153.0px;top:62.19999999999999px;width:50px;text-align:center;font-size:9px;color:#000;">91</div>
<div class="t" style="left:214.0px;top:62.19999999999999px;width:40px;text-align:center;font-size:9px;color:#000;">236</div>
<div class="t" style="left:273.0px;top:62.19999999999999px;width:60px;text-align:center;font-size:9px;color:#000;">21546</div>
<div class="t" style="left:-0.20000000000000284px;top:74.19999999999999px;width:20px;text-align:center;font-size:8.6px;color:#2a3240;">13</div>
<div class="t" style="left:22.5px;top:74.80000000000001px;font-size:8.1px;color:#000;">Мясо</div>
<div class="t" style="left:87.0px;top:74.19999999999999px;width:60px;text-align:center;font-size:9px;color:#000;">30.04.2016</div>
<div class="t" style="left:153.0px;top:74.19999999999999px;width:50px;text-align:center;font-size:9px;color:#000;">91</div>
<div class="t" style="left:214.0px;top:74.19999999999999px;width:40px;text-align:center;font-size:9px;color:#000;">236</div>
<div class="t" style="left:273.0px;top:74.19999999999999px;width:60px;text-align:center;font-size:9px;color:#000;">21546</div>
<div class="t" style="left:-0.20000000000000284px;top:86.19999999999999px;width:20px;text-align:center;font-size:8.6px;color:#2a3240;">14</div>
<div class="t" style="left:22.5px;top:86.80000000000001px;font-size:8.1px;color:#000;">Мясо</div>
<div class="t" style="left:87.0px;top:86.19999999999999px;width:60px;text-align:center;font-size:9px;color:#000;">30.04.2016</div>
<div class="t" style="left:153.0px;top:86.19999999999999px;width:50px;text-align:center;font-size:9px;color:#000;">91</div>
<div class="t" style="left:214.0px;top:86.19999999999999px;width:40px;text-align:center;font-size:9px;color:#000;">236</div>
<div class="t" style="left:273.0px;top:86.19999999999999px;width:60px;text-align:center;font-size:9px;color:#000;">21546</div>
<div class="t" style="left:-0.20000000000000284px;top:98.19999999999999px;width:20px;text-align:center;font-size:8.6px;color:#2a3240;">15</div>
<div class="t" style="left:22.5px;top:98.80000000000001px;font-size:8.1px;color:#000;">Мясо</div>
<div class="t" style="left:87.0px;top:98.19999999999999px;width:60px;text-align:center;font-size:9px;color:#000;">30.04.2016</div>
<div class="t" style="left:153.0px;top:98.19999999999999px;width:50px;text-align:center;font-size:9px;color:#000;">91</div>
<div class="t" style="left:214.0px;top:98.19999999999999px;width:40px;text-align:center;font-size:9px;color:#000;">236</div>
<div class="t" style="left:273.0px;top:98.19999999999999px;width:60px;text-align:center;font-size:9px;color:#000;">21546</div>
<div class="t" style="left:-0.20000000000000284px;top:110.19999999999999px;width:20px;text-align:center;font-size:8.6px;color:#2a3240;">16</div>
<div class="t" style="left:22.5px;top:110.80000000000001px;font-size:8.1px;color:#000;">Мясо</div>
<div class="t" style="left:87.0px;top:110.19999999999999px;width:60px;text-align:center;font-size:9px;color:#000;">30.04.2016</div>
<div class="t" style="left:153.0px;top:110.19999999999999px;width:50px;text-align:center;font-size:9px;color:#000;">91</div>
<div class="t" style="left:214.0px;top:110.19999999999999px;width:40px;text-align:center;font-size:9px;color:#000;">236</div>
<div class="t" style="left:273.0px;top:110.19999999999999px;width:60px;text-align:center;font-size:9px;color:#000;">21546</div>
<div class="t" style="left:-0.20000000000000284px;top:122.19999999999999px;width:20px;text-align:center;font-size:8.6px;color:#2a3240;">17</div>
<div class="t" style="left:22.5px;top:122.80000000000001px;font-size:8.1px;color:#000;">Мясо</div>
<div class="t" style="left:87.0px;top:122.19999999999999px;width:60px;text-align:center;font-size:9px;color:#000;">30.04.2016</div>
<div class="t" style="left:153.0px;top:122.19999999999999px;width:50px;text-align:center;font-size:9px;color:#000;">91</div>
<div class="t" style="left:214.0px;top:122.19999999999999px;width:40px;text-align:center;font-size:9px;color:#000;">236</div>
<div class="t" style="left:273.0px;top:122.19999999999999px;width:60px;text-align:center;font-size:9px;color:#000;">21546</div>
<div class="t" style="left:-0.20000000000000284px;top:134.2px;width:20px;text-align:center;font-size:8.6px;color:#2a3240;">18</div>
<div class="t" style="left:22.5px;top:134.8px;font-size:8.1px;color:#000;">Мясо</div>
<div class="t" style="left:87.0px;top:134.2px;width:60px;text-align:center;font-size:9px;color:#000;">30.04.2016</div>
<div class="t" style="left:153.0px;top:134.2px;width:50px;text-align:center;font-size:9px;color:#000;">91</div>
<div class="t" style="left:214.0px;top:134.2px;width:40px;text-align:center;font-size:9px;color:#000;">236</div>
<div class="t" style="left:273.0px;top:134.2px;width:60px;text-align:center;font-size:9px;color:#000;">21546</div>
<div class="t" style="left:-0.20000000000000284px;top:146.2px;width:20px;text-align:center;font-size:8.6px;color:#2a3240;">19</div>
<div class="t" style="left:22.5px;top:146.8px;font-size:8.1px;color:#000;">Рыба</div>
<div class="t" style="left:87.0px;top:146.2px;width:60px;text-align:center;font-size:9px;color:#000;">30.04.2016</div>
<div class="t" style="left:153.0px;top:146.2px;width:50px;text-align:center;font-size:9px;color:#000;">60</div>
<div class="t" style="left:214.0px;top:146.2px;width:40px;text-align:center;font-size:9px;color:#000;">289</div>
<div class="t" style="left:273.0px;top:146.2px;width:60px;text-align:center;font-size:9px;color:#000;">15461</div>
<div class="t" style="left:-0.20000000000000284px;top:158.2px;width:20px;text-align:center;font-size:8.6px;color:#2a3240;">20</div>
<div class="t" style="left:22.5px;top:158.8px;font-size:8.1px;color:#000;">Рыба</div>
<div class="t" style="left:87.0px;top:158.2px;width:60px;text-align:center;font-size:9px;color:#000;">30.04.2016</div>
<div class="t" style="left:153.0px;top:158.2px;width:50px;text-align:center;font-size:9px;color:#000;">60</div>
<div class="t" style="left:214.0px;top:158.2px;width:40px;text-align:center;font-size:9px;color:#000;">289</div>
<div class="t" style="left:273.0px;top:158.2px;width:60px;text-align:center;font-size:9px;color:#000;">15461</div>
<div class="t" style="left:-0.20000000000000284px;top:170.2px;width:20px;text-align:center;font-size:8.6px;color:#2a3240;">21</div>
<div class="t" style="left:22.5px;top:170.8px;font-size:8.1px;color:#000;">Рыба</div>
<div class="t" style="left:87.0px;top:170.2px;width:60px;text-align:center;font-size:9px;color:#000;">30.04.2016</div>
<div class="t" style="left:153.0px;top:170.2px;width:50px;text-align:center;font-size:9px;color:#000;">60</div>
<div class="t" style="left:214.0px;top:170.2px;width:40px;text-align:center;font-size:9px;color:#000;">289</div>
<div class="t" style="left:273.0px;top:170.2px;width:60px;text-align:center;font-size:9px;color:#000;">15461</div>
<div class="t" style="left:-0.20000000000000284px;top:182.2px;width:20px;text-align:center;font-size:8.6px;color:#2a3240;">22</div>
<div class="t" style="left:22.5px;top:182.8px;font-size:8.1px;color:#000;">Рыба</div>
<div class="t" style="left:87.0px;top:182.2px;width:60px;text-align:center;font-size:9px;color:#000;">30.04.2016</div>
<div class="t" style="left:153.0px;top:182.2px;width:50px;text-align:center;font-size:9px;color:#000;">60</div>
<div class="t" style="left:214.0px;top:182.2px;width:40px;text-align:center;font-size:9px;color:#000;">289</div>
<div class="t" style="left:273.0px;top:182.2px;width:60px;text-align:center;font-size:9px;color:#000;">15461</div>
<div class="t" style="left:-0.20000000000000284px;top:194.2px;width:20px;text-align:center;font-size:8.6px;color:#2a3240;">23</div>
<div class="t" style="left:22.5px;top:194.8px;font-size:8.1px;color:#000;">Рыба</div>
<div class="t" style="left:87.0px;top:194.2px;width:60px;text-align:center;font-size:9px;color:#000;">30.04.2016</div>
<div class="t" style="left:153.0px;top:194.2px;width:50px;text-align:center;font-size:9px;color:#000;">60</div>
<div class="t" style="left:214.0px;top:194.2px;width:40px;text-align:center;font-size:9px;color:#000;">289</div>
<div class="t" style="left:273.0px;top:194.2px;width:60px;text-align:center;font-size:9px;color:#000;">15461</div>
<div class="t" style="left:-0.20000000000000284px;top:206.2px;width:20px;text-align:center;font-size:8.6px;color:#2a3240;">24</div>
<div class="t" style="left:22.5px;top:206.8px;font-size:8.1px;color:#000;">Рыба</div>
<div class="t" style="left:87.0px;top:206.2px;width:60px;text-align:center;font-size:9px;color:#000;">30.04.2016</div>
<div class="t" style="left:153.0px;top:206.2px;width:50px;text-align:center;font-size:9px;color:#000;">60</div>
<div class="t" style="left:214.0px;top:206.2px;width:40px;text-align:center;font-size:9px;color:#000;">289</div>
<div class="t" style="left:273.0px;top:206.2px;width:60px;text-align:center;font-size:9px;color:#000;">15461</div>
<div class="t" style="left:-0.20000000000000284px;top:218.2px;width:20px;text-align:center;font-size:8.6px;color:#2a3240;">25</div>
<div class="t" style="left:22.5px;top:218.8px;font-size:8.1px;color:#000;">Рыба</div>
<div class="t" style="left:87.0px;top:218.2px;width:60px;text-align:center;font-size:9px;color:#000;">30.04.2016</div>
<div class="t" style="left:153.0px;top:218.2px;width:50px;text-align:center;font-size:9px;color:#000;">60</div>
<div class="t" style="left:214.0px;top:218.2px;width:40px;text-align:center;font-size:9px;color:#000;">289</div>
<div class="t" style="left:273.0px;top:218.2px;width:60px;text-align:center;font-size:9px;color:#000;">15461</div>
<div class="t" style="left:-0.20000000000000284px;top:230.2px;width:20px;text-align:center;font-size:8.6px;color:#2a3240;">26</div>
<div class="t" style="left:22.5px;top:230.8px;font-size:8.1px;color:#000;">Рыба</div>
<div class="t" style="left:87.0px;top:230.2px;width:60px;text-align:center;font-size:9px;color:#000;">30.04.2016</div>
<div class="t" style="left:153.0px;top:230.2px;width:50px;text-align:center;font-size:9px;color:#000;">60</div>
<div class="t" style="left:214.0px;top:230.2px;width:40px;text-align:center;font-size:9px;color:#000;">289</div>
<div class="t" style="left:273.0px;top:230.2px;width:60px;text-align:center;font-size:9px;color:#000;">15461</div>
<div class="t" style="left:-0.20000000000000284px;top:242.2px;width:20px;text-align:center;font-size:8.6px;color:#2a3240;">27</div>
<div class="t" style="left:22.5px;top:242.8px;font-size:8.1px;color:#000;">Рыба</div>
<div class="t" style="left:87.0px;top:242.2px;width:60px;text-align:center;font-size:9px;color:#000;">30.04.2016</div>
<div class="t" style="left:153.0px;top:242.2px;width:50px;text-align:center;font-size:9px;color:#000;">60</div>
<div class="t" style="left:214.0px;top:242.2px;width:40px;text-align:center;font-size:9px;color:#000;">289</div>
<div class="t" style="left:273.0px;top:242.2px;width:60px;text-align:center;font-size:9px;color:#000;">15461</div>
<div class="t" style="left:-0.20000000000000284px;top:254.2px;width:20px;text-align:center;font-size:8.6px;color:#2a3240;">28</div>
<div class="t" style="left:22.5px;top:254.8px;font-size:8.1px;color:#000;">Сахар</div>
<div class="t" style="left:87.0px;top:254.2px;width:60px;text-align:center;font-size:9px;color:#000;">01.05.2016</div>
<div class="t" style="left:153.0px;top:254.2px;width:50px;text-align:center;font-size:9px;color:#000;">190</div>
<div class="t" style="left:214.0px;top:254.2px;width:40px;text-align:center;font-size:9px;color:#000;">45</div>
<div class="t" style="left:273.0px;top:254.2px;width:60px;text-align:center;font-size:9px;color:#000;">2457</div>
<div class="t" style="left:-0.20000000000000284px;top:266.2px;width:20px;text-align:center;font-size:8.6px;color:#2a3240;">29</div>
<div class="t" style="left:22.5px;top:266.8px;font-size:8.1px;color:#000;">Сахар</div>
<div class="t" style="left:87.0px;top:266.2px;width:60px;text-align:center;font-size:9px;color:#000;">01.05.2016</div>
<div class="t" style="left:153.0px;top:266.2px;width:50px;text-align:center;font-size:9px;color:#000;">190</div>
<div class="t" style="left:214.0px;top:266.2px;width:40px;text-align:center;font-size:9px;color:#000;">45</div>
<div class="t" style="left:273.0px;top:266.2px;width:60px;text-align:center;font-size:9px;color:#000;">2457</div>
<div class="t" style="left:-0.20000000000000284px;top:278.2px;width:20px;text-align:center;font-size:8.6px;color:#2a3240;">30</div>
<div class="t" style="left:22.5px;top:278.8px;font-size:8.1px;color:#000;">Сахар</div>
<div class="t" style="left:87.0px;top:278.2px;width:60px;text-align:center;font-size:9px;color:#000;">01.05.2016</div>
<div class="t" style="left:153.0px;top:278.2px;width:50px;text-align:center;font-size:9px;color:#000;">190</div>
<div class="t" style="left:214.0px;top:278.2px;width:40px;text-align:center;font-size:9px;color:#000;">45</div>
<div class="t" style="left:273.0px;top:278.2px;width:60px;text-align:center;font-size:9px;color:#000;">2457</div>
<div class="t" style="left:-0.20000000000000284px;top:290.2px;width:20px;text-align:center;font-size:8.6px;color:#2a3240;">31</div>
<div class="t" style="left:22.5px;top:290.8px;font-size:8.1px;color:#000;">Сахар</div>
<div class="t" style="left:87.0px;top:290.2px;width:60px;text-align:center;font-size:9px;color:#000;">01.05.2016</div>
<div class="t" style="left:153.0px;top:290.2px;width:50px;text-align:center;font-size:9px;color:#000;">190</div>
<div class="t" style="left:214.0px;top:290.2px;width:40px;text-align:center;font-size:9px;color:#000;">45</div>
<div class="t" style="left:273.0px;top:290.2px;width:60px;text-align:center;font-size:9px;color:#000;">2457</div>
<div class="t" style="left:-0.20000000000000284px;top:302.20000000000005px;width:20px;text-align:center;font-size:8.6px;color:#2a3240;">32</div>
<div class="t" style="left:22.5px;top:302.79999999999995px;font-size:8.1px;color:#000;">Сахар</div>
<div class="t" style="left:87.0px;top:302.20000000000005px;width:60px;text-align:center;font-size:9px;color:#000;">01.05.2016</div>
<div class="t" style="left:153.0px;top:302.20000000000005px;width:50px;text-align:center;font-size:9px;color:#000;">190</div>
<div class="t" style="left:214.0px;top:302.20000000000005px;width:40px;text-align:center;font-size:9px;color:#000;">45</div>
<div class="t" style="left:273.0px;top:302.20000000000005px;width:60px;text-align:center;font-size:9px;color:#000;">2457</div>
<div class="t" style="left:-0.20000000000000284px;top:314.20000000000005px;width:20px;text-align:center;font-size:8.6px;color:#2a3240;">33</div>
<div class="t" style="left:22.5px;top:314.79999999999995px;font-size:8.1px;color:#000;">Сахар</div>
<div class="t" style="left:87.0px;top:314.20000000000005px;width:60px;text-align:center;font-size:9px;color:#000;">01.05.2016</div>
<div class="t" style="left:153.0px;top:314.20000000000005px;width:50px;text-align:center;font-size:9px;color:#000;">190</div>
<div class="t" style="left:214.0px;top:314.20000000000005px;width:40px;text-align:center;font-size:9px;color:#000;">45</div>
<div class="t" style="left:273.0px;top:314.20000000000005px;width:60px;text-align:center;font-size:9px;color:#000;">2457</div>
<div class="t" style="left:-0.20000000000000284px;top:326.20000000000005px;width:20px;text-align:center;font-size:8.6px;color:#2a3240;">34</div>
<div class="t" style="left:22.5px;top:326.79999999999995px;font-size:8.1px;color:#000;">Сахар</div>
<div class="t" style="left:87.0px;top:326.20000000000005px;width:60px;text-align:center;font-size:9px;color:#000;">01.05.2016</div>
<div class="t" style="left:153.0px;top:326.20000000000005px;width:50px;text-align:center;font-size:9px;color:#000;">190</div>
<div class="t" style="left:214.0px;top:326.20000000000005px;width:40px;text-align:center;font-size:9px;color:#000;">45</div>
<div class="t" style="left:273.0px;top:326.20000000000005px;width:60px;text-align:center;font-size:9px;color:#000;">2457</div>
<div class="t" style="left:-0.20000000000000284px;top:338.20000000000005px;width:20px;text-align:center;font-size:8.6px;color:#2a3240;">35</div>
<div class="t" style="left:22.5px;top:338.79999999999995px;font-size:8.1px;color:#000;">Сахар</div>
<div class="t" style="left:87.0px;top:338.20000000000005px;width:60px;text-align:center;font-size:9px;color:#000;">01.05.2016</div>
<div class="t" style="left:153.0px;top:338.20000000000005px;width:50px;text-align:center;font-size:9px;color:#000;">190</div>
<div class="t" style="left:214.0px;top:338.20000000000005px;width:40px;text-align:center;font-size:9px;color:#000;">45</div>
<div class="t" style="left:273.0px;top:338.20000000000005px;width:60px;text-align:center;font-size:9px;color:#000;">2457</div>
<div class="t" style="left:-0.20000000000000284px;top:350.20000000000005px;width:20px;text-align:center;font-size:8.6px;color:#2a3240;">36</div>
<div class="t" style="left:22.5px;top:350.79999999999995px;font-size:8.1px;color:#000;">Сахар</div>
<div class="t" style="left:87.0px;top:350.20000000000005px;width:60px;text-align:center;font-size:9px;color:#000;">01.05.2016</div>
<div class="t" style="left:153.0px;top:350.20000000000005px;width:50px;text-align:center;font-size:9px;color:#000;">190</div>
<div class="t" style="left:214.0px;top:350.20000000000005px;width:40px;text-align:center;font-size:9px;color:#000;">45</div>
<div class="t" style="left:273.0px;top:350.20000000000005px;width:60px;text-align:center;font-size:9px;color:#000;">2457</div>
<div class="t" style="left:-0.20000000000000284px;top:362.20000000000005px;width:20px;text-align:center;font-size:8.6px;color:#2a3240;">37</div>
<div class="t" style="left:22.5px;top:362.79999999999995px;font-size:8.1px;color:#000;">Картофель</div>
<div class="t" style="left:87.0px;top:362.20000000000005px;width:60px;text-align:center;font-size:9px;color:#000;">02.05.2016</div>
<div class="t" style="left:153.0px;top:362.20000000000005px;width:50px;text-align:center;font-size:9px;color:#000;">264</div>
<div class="t" style="left:214.0px;top:362.20000000000005px;width:40px;text-align:center;font-size:9px;color:#000;">45</div>
<div class="t" style="left:273.0px;top:362.20000000000005px;width:60px;text-align:center;font-size:9px;color:#000;">21563</div>
<div class="t" style="left:-0.20000000000000284px;top:374.20000000000005px;width:20px;text-align:center;font-size:8.6px;color:#2a3240;">38</div>
<div class="t" style="left:22.5px;top:374.79999999999995px;font-size:8.1px;color:#000;">Картофель</div>
<div class="t" style="left:87.0px;top:374.20000000000005px;width:60px;text-align:center;font-size:9px;color:#000;">02.05.2016</div>
<div class="t" style="left:153.0px;top:374.20000000000005px;width:50px;text-align:center;font-size:9px;color:#000;">264</div>
<div class="t" style="left:214.0px;top:374.20000000000005px;width:40px;text-align:center;font-size:9px;color:#000;">45</div>
<div class="t" style="left:273.0px;top:374.20000000000005px;width:60px;text-align:center;font-size:9px;color:#000;">21563</div>
<div class="t" style="left:-0.20000000000000284px;top:386.20000000000005px;width:20px;text-align:center;font-size:8.6px;color:#2a3240;">39</div>
<div class="t" style="left:22.5px;top:386.79999999999995px;font-size:8.1px;color:#000;">Картофель</div>
<div class="t" style="left:87.0px;top:386.20000000000005px;width:60px;text-align:center;font-size:9px;color:#000;">02.05.2016</div>
<div class="t" style="left:153.0px;top:386.20000000000005px;width:50px;text-align:center;font-size:9px;color:#000;">264</div>
<div class="t" style="left:214.0px;top:386.20000000000005px;width:40px;text-align:center;font-size:9px;color:#000;">45</div>
<div class="t" style="left:273.0px;top:386.20000000000005px;width:60px;text-align:center;font-size:9px;color:#000;">21563</div>
<div class="t" style="left:-0.20000000000000284px;top:398.20000000000005px;width:20px;text-align:center;font-size:8.6px;color:#2a3240;">40</div>
<div class="t" style="left:22.5px;top:398.79999999999995px;font-size:8.1px;color:#000;">Картофель</div>
<div class="t" style="left:87.0px;top:398.20000000000005px;width:60px;text-align:center;font-size:9px;color:#000;">02.05.2016</div>
<div class="t" style="left:153.0px;top:398.20000000000005px;width:50px;text-align:center;font-size:9px;color:#000;">264</div>
<div class="t" style="left:214.0px;top:398.20000000000005px;width:40px;text-align:center;font-size:9px;color:#000;">45</div>
<div class="t" style="left:273.0px;top:398.20000000000005px;width:60px;text-align:center;font-size:9px;color:#000;">21563</div>
<div class="t" style="left:-0.20000000000000284px;top:410.20000000000005px;width:20px;text-align:center;font-size:8.6px;color:#2a3240;">41</div>
<div class="t" style="left:22.5px;top:410.79999999999995px;font-size:8.1px;color:#000;">Картофель</div>
<div class="t" style="left:87.0px;top:410.20000000000005px;width:60px;text-align:center;font-size:9px;color:#000;">02.05.2016</div>
<div class="t" style="left:153.0px;top:410.20000000000005px;width:50px;text-align:center;font-size:9px;color:#000;">264</div>
<div class="t" style="left:214.0px;top:410.20000000000005px;width:40px;text-align:center;font-size:9px;color:#000;">45</div>
<div class="t" style="left:273.0px;top:410.20000000000005px;width:60px;text-align:center;font-size:9px;color:#000;">21563</div>
<div class="t" style="left:-0.20000000000000284px;top:422.20000000000005px;width:20px;text-align:center;font-size:8.6px;color:#2a3240;">42</div>
<div class="t" style="left:22.5px;top:422.79999999999995px;font-size:8.1px;color:#000;">Картофель</div>
<div class="t" style="left:87.0px;top:422.20000000000005px;width:60px;text-align:center;font-size:9px;color:#000;">02.05.2016</div>
<div class="t" style="left:153.0px;top:422.20000000000005px;width:50px;text-align:center;font-size:9px;color:#000;">264</div>
<div class="t" style="left:214.0px;top:422.20000000000005px;width:40px;text-align:center;font-size:9px;color:#000;">45</div>
<div class="t" style="left:273.0px;top:422.20000000000005px;width:60px;text-align:center;font-size:9px;color:#000;">21563</div>
<div class="t" style="left:-0.20000000000000284px;top:434.20000000000005px;width:20px;text-align:center;font-size:8.6px;color:#2a3240;">43</div>
<div class="t" style="left:22.5px;top:434.79999999999995px;font-size:8.1px;color:#000;">Картофель</div>
<div class="t" style="left:87.0px;top:434.20000000000005px;width:60px;text-align:center;font-size:9px;color:#000;">02.05.2016</div>
<div class="t" style="left:153.0px;top:434.20000000000005px;width:50px;text-align:center;font-size:9px;color:#000;">264</div>
<div class="t" style="left:214.0px;top:434.20000000000005px;width:40px;text-align:center;font-size:9px;color:#000;">45</div>
<div class="t" style="left:273.0px;top:434.20000000000005px;width:60px;text-align:center;font-size:9px;color:#000;">21563</div>
<div class="t" style="left:-0.20000000000000284px;top:446.20000000000005px;width:20px;text-align:center;font-size:8.6px;color:#2a3240;">44</div>
<div class="t" style="left:22.5px;top:446.79999999999995px;font-size:8.1px;color:#000;">Картофель</div>
<div class="t" style="left:87.0px;top:446.20000000000005px;width:60px;text-align:center;font-size:9px;color:#000;">02.05.2016</div>
<div class="t" style="left:153.0px;top:446.20000000000005px;width:50px;text-align:center;font-size:9px;color:#000;">264</div>
<div class="t" style="left:214.0px;top:446.20000000000005px;width:40px;text-align:center;font-size:9px;color:#000;">45</div>
<div class="t" style="left:273.0px;top:446.20000000000005px;width:60px;text-align:center;font-size:9px;color:#000;">21563</div>
<div class="t" style="left:-0.20000000000000284px;top:458.20000000000005px;width:20px;text-align:center;font-size:8.6px;color:#2a3240;">45</div>
<div class="t" style="left:22.5px;top:458.79999999999995px;font-size:8.1px;color:#000;">Картофель</div>
<div class="t" style="left:87.0px;top:458.20000000000005px;width:60px;text-align:center;font-size:9px;color:#000;">02.05.2016</div>
<div class="t" style="left:153.0px;top:458.20000000000005px;width:50px;text-align:center;font-size:9px;color:#000;">264</div>
<div class="t" style="left:214.0px;top:458.20000000000005px;width:40px;text-align:center;font-size:9px;color:#000;">45</div>
<div class="t" style="left:273.0px;top:458.20000000000005px;width:60px;text-align:center;font-size:9px;color:#000;">21563</div>
<div class="t" style="left:-0.20000000000000284px;top:470.20000000000005px;width:20px;text-align:center;font-size:8.6px;color:#2a3240;">46</div>
<div class="t" style="left:22.5px;top:470.79999999999995px;font-size:8.1px;color:#000;">Мясо</div>
<div class="t" style="left:87.0px;top:470.20000000000005px;width:60px;text-align:center;font-size:9px;color:#000;">02.05.2016</div>
<div class="t" style="left:153.0px;top:470.20000000000005px;width:50px;text-align:center;font-size:9px;color:#000;">45</div>
<div class="t" style="left:214.0px;top:470.20000000000005px;width:40px;text-align:center;font-size:9px;color:#000;">236</div>
<div class="t" style="left:273.0px;top:470.20000000000005px;width:60px;text-align:center;font-size:9px;color:#000;">7855</div>
<div class="ab" style="left:257px;top:214px;width:91px;height:15px;border:1px solid #000;box-shadow:inset 0 0 0 1px #fff, inset 0 0 0 2px #000"></div>
<div class="ab" style="left:345px;top:214px;width:3px;height:10px;background:#fcd26e"></div>
<div class="ab" style="left:344px;top:225px;width:5px;height:5px;background:#fcd26e;border:1px solid #222"></div>
</div>
<div class="ab" style="left:792px;top:198px;width:17px;height:488px;background:#dfe3e9"></div>
<div class="ab" style="left:792px;top:198px;width:1px;height:13px;background:#c2c8cf"></div>
<div class="ab" style="left:795px;top:198px;width:13px;height:9px;border:1px solid #6b7685;background:#fff"></div>
<div class="ab" style="left:797px;top:202px;width:9px;height:1px;background:#6b7685"></div>
<svg class="ab" style="left:795px;top:212px" width="11" height="6" viewBox="0 0 11 6" shape-rendering="crispEdges"><path d="M0 6L5.5 0 11 6z" fill="#3a4350" shape-rendering="geometricPrecision"/></svg>
<div class="ab" style="left:793px;top:251px;width:15px;height:174px;border:1px solid #9aa4b0;border-radius:2px;background:linear-gradient(90deg,#f8f9fb,#e5e9ee)"></div>
<div class="ab" style="left:797px;top:334px;width:7px;height:1px;background:#8a94a0"></div>
<div class="ab" style="left:797px;top:336px;width:7px;height:1px;background:#8a94a0"></div>
<div class="ab" style="left:797px;top:338px;width:7px;height:1px;background:#8a94a0"></div>
<div class="ab" style="left:797px;top:340px;width:7px;height:1px;background:#8a94a0"></div>
<svg class="ab" style="left:795px;top:674px" width="11" height="6" viewBox="0 0 11 6" shape-rendering="crispEdges"><path d="M0 0L5.5 6 11 0z" fill="#3a4350" shape-rendering="geometricPrecision"/></svg>
<div class="ab" style="left:40px;top:686px;width:769px;height:16px;background:linear-gradient(#e4e8ed,#d9dee4)"></div>
<div class="ab" style="left:40px;top:686px;width:769px;height:1px;background:#b3bcc7"></div>
<svg class="ab" style="left:46px;top:690px" width="6" height="8" viewBox="0 0 6 8" shape-rendering="crispEdges"><rect x="0" y="0" width="1.5" height="8" fill="#3a4350"/><path d="M6 0v8L1.5 4z" fill="#3a4350" shape-rendering="geometricPrecision"/></svg>
<svg class="ab" style="left:61.5px;top:690px" width="5" height="8" viewBox="0 0 5 8" shape-rendering="crispEdges"><path d="M5 0v8L0 4z" fill="#3a4350" shape-rendering="geometricPrecision"/></svg>
<svg class="ab" style="left:76px;top:690px" width="5" height="8" viewBox="0 0 5 8" shape-rendering="crispEdges"><path d="M0 0v8L5 4z" fill="#3a4350" shape-rendering="geometricPrecision"/></svg>
<svg class="ab" style="left:90px;top:690px" width="6" height="8" viewBox="0 0 6 8" shape-rendering="crispEdges"><path d="M0 0v8L4.5 4z" fill="#3a4350" shape-rendering="geometricPrecision"/><rect x="4.5" y="0" width="1.5" height="8" fill="#3a4350"/></svg>
<div class="ab" style="left:102px;top:686px;width:1px;height:15px;background:#b3bcc7"></div>
<svg class="ab" style="left:100px;top:686px" width="380" height="16" viewBox="0 0 380 16"><path d="M136 15 L148 0 L217 0 L206 15 Z" fill="#e1e5ea"/><path d="M136 15 L148 0.5 M217 0.5 L206 15" stroke="#9aa4b0" fill="none"/><path d="M206 15 L217 0 L282 0 L270.5 15 Z" fill="#e1e5ea"/><path d="M206 15 L217 0.5 M282 0.5 L270.5 15" stroke="#9aa4b0" fill="none"/><path d="M270.5 15 L282 0 L339.5 0 L329 15 Z" fill="#e1e5ea"/><path d="M270.5 15 L282 0.5 M339.5 0.5 L329 15" stroke="#9aa4b0" fill="none"/><path d="M329 15 L339.5 0 L371.5 0 L358 15 Z" fill="#e1e5ea"/><path d="M329 15 L339.5 0.5 M371.5 0.5 L358 15" stroke="#9aa4b0" fill="none"/><path d="M3 0 L148 0 L136 15 L3 15 Z" fill="#fff"/><path d="M148 0.5 L136 15" stroke="#9aa4b0" fill="none"/></svg>
<div class="t" style="left:112.5px;top:689.3px;font-size:12px;color:#1e2a3c;font-weight:bold;letter-spacing:0.35px">Продукты питания</div>
<div class="t" style="left:251.5px;top:689.3px;font-size:11.9px;color:#2a3a52;font-weight:normal;">Таблица</div>
<div class="t" style="left:318px;top:689.3px;font-size:11.9px;color:#2a3a52;font-weight:normal;">Рассчет</div>
<div class="t" style="left:384px;top:689.3px;font-size:11.4px;color:#2a3a52;font-weight:normal;">Вывод</div>
<svg class="ab" style="left:441px;top:688px" width="15" height="12" viewBox="0 0 15 12" shape-rendering="crispEdges"><path d="M3.5 4.5h9a2 2 0 0 1 2 2v4h-11z" fill="#f4f7fa" stroke="#2c5fb8" shape-rendering="geometricPrecision"/><path d="M4 0l1 2.5L7.5 1 6 3.5 8.5 4.5 6 5.5 7 8 4.5 6.5 3.5 9 3 6.5 0.5 7.5 2 5 0 3.5 2.5 3z" fill="#f2a41c" shape-rendering="geometricPrecision"/></svg>
<div class="ab" style="left:401px;top:701px;width:0px;height:0px;"></div>
<div class="ab" style="left:491px;top:687px;width:8px;height:14px;border:1px solid #6b7685;background:#fff"></div>
<div class="ab" style="left:494px;top:690px;width:1px;height:8px;background:#6b7685"></div>
<svg class="ab" style="left:504px;top:691px" width="5" height="8" viewBox="0 0 5 8" shape-rendering="crispEdges"><path d="M5 0v8L0 4z" fill="#3a4350" shape-rendering="geometricPrecision"/></svg>
<div class="ab" style="left:516px;top:687px;width:232px;height:14px;border:1px solid #9aa4b0;border-radius:2px;background:linear-gradient(#fafbfc,#e6eaef)"></div>
<div class="ab" style="left:629px;top:692px;width:1px;height:6px;background:#8a94a0"></div>
<div class="ab" style="left:631px;top:692px;width:1px;height:6px;background:#8a94a0"></div>
<div class="ab" style="left:633px;top:692px;width:1px;height:6px;background:#8a94a0"></div>
<div class="ab" style="left:635px;top:692px;width:1px;height:6px;background:#8a94a0"></div>
<svg class="ab" style="left:773px;top:691px" width="5" height="8" viewBox="0 0 5 8" shape-rendering="crispEdges"><path d="M0 0v8L5 4z" fill="#3a4350" shape-rendering="geometricPrecision"/></svg>
<div class="ab" style="left:785px;top:687px;width:7px;height:14px;border:1px solid #6b7685;background:#fff"></div>
<div class="ab" style="left:788px;top:690px;width:1px;height:8px;background:#6b7685"></div>
<div class="ab" style="left:40px;top:701px;width:769px;height:2px;background:#98a1ac"></div>
<div class="ab" style="left:40px;top:703px;width:769px;height:1px;background:#f4f6f8"></div>
<div class="ab" style="left:40px;top:704px;width:769px;height:21px;background:linear-gradient(#eaedf0,#dfe2e6 45%,#d3d7dc)"></div>
<div class="ab" style="left:40px;top:724px;width:769px;height:1px;background:#7d8793"></div>
<div class="t" style="left:48px;top:706.8px;font-size:11.6px;color:#1e2a3c;font-weight:normal;">Готово</div>
<div class="ab" style="left:94px;top:704px;width:1px;height:19px;background:#a8b2be"></div>
<div class="ab" style="left:95px;top:704px;width:1px;height:19px;background:rgba(255,255,255,.7)"></div>
<svg class="ab" style="left:104px;top:706px" width="16" height="13" viewBox="0 0 16 13" shape-rendering="crispEdges"><rect x="0.5" y="1.5" width="15" height="11" fill="#fff" stroke="#5a6470"/><rect x="1" y="2" width="14" height="3" fill="#4a90e2"/><rect x="4" y="6" width="3" height="1" fill="#8fa8c8"/><rect x="8" y="6" width="3" height="1" fill="#8fa8c8"/><rect x="12" y="6" width="3" height="1" fill="#8fa8c8"/><rect x="4" y="8" width="3" height="1" fill="#8fa8c8"/><rect x="8" y="8" width="3" height="1" fill="#8fa8c8"/><rect x="12" y="8" width="3" height="1" fill="#8fa8c8"/><rect x="4" y="10" width="3" height="1" fill="#8fa8c8"/><rect x="8" y="10" width="3" height="1" fill="#8fa8c8"/><rect x="12" y="10" width="3" height="1" fill="#8fa8c8"/><circle cx="3.5" cy="3.5" r="3" fill="#e0502a" stroke="#f6b040" shape-rendering="geometricPrecision"/></svg>
<div class="ab" style="left:130px;top:704px;width:1px;height:19px;background:#a8b2be"></div>
<div class="ab" style="left:131px;top:704px;width:1px;height:19px;background:rgba(255,255,255,.7)"></div>
<div class="ab" style="left:551px;top:704px;width:1px;height:19px;background:#a8b2be"></div>
<svg class="ab" style="left:559px;top:707px" width="13" height="13" viewBox="0 0 13 13" shape-rendering="crispEdges"><rect x="0.5" y="0.5" width="12" height="12" fill="#fff" stroke="#4a525e"/><path d="M0 4.5h13M0 8.5h13M4.5 0v13M8.5 0v13" stroke="#4a525e"/></svg>
<svg class="ab" style="left:577px;top:706px" width="14" height="14" viewBox="0 0 14 14" shape-rendering="crispEdges"><rect x="0.5" y="0.5" width="13" height="13" fill="#e8ebef" stroke="#4a525e"/><rect x="3.5" y="2.5" width="7" height="9" fill="#fff" stroke="#4a525e"/><rect x="5" y="5" width="4" height="1" fill="#8a929c"/><rect x="5" y="7" width="4" height="1" fill="#8a929c"/></svg>
<div class="ab" style="left:593px;top:704px;width:19px;height:18px;border:1px solid #d9a040;border-radius:2px;background:linear-gradient(#fff0c0,#fdd780 50%,#f8c454 55%,#fbd98a)"></div>
<svg class="ab" style="left:596px;top:706px" width="13" height="13" viewBox="0 0 13 13" shape-rendering="crispEdges"><rect x="0.5" y="0.5" width="12" height="12" fill="#8c96a2" stroke="#4a525e"/><rect x="2" y="2" width="4" height="7" fill="#fff"/><rect x="7" y="2" width="4" height="7" fill="#fff"/><rect x="6" y="2" width="1" height="9" fill="#4a525e"/><rect x="1" y="9" width="11" height="3" fill="#4a525e"/></svg>
<div class="t" style="left:621.5px;top:707px;font-size:11px;color:#1e2a3c;font-weight:normal;">60%</div>
<svg class="ab" style="left:657px;top:705px" width="16" height="16" viewBox="0 0 16 16"><circle cx="8" cy="8" r="7.2" fill="#f4f6f8" stroke="#7b8592" stroke-width="1"/><rect x="4" y="7" width="8" height="2" fill="#3a4350"/></svg>
<div class="ab" style="left:673px;top:712px;width:100px;height:1px;background:#9aa3ad"></div>
<div class="ab" style="left:673px;top:713px;width:100px;height:1px;background:#fff"></div>
<div class="ab" style="left:722px;top:709px;width:1px;height:8px;background:#9aa3ad"></div>
<svg class="ab" style="left:698px;top:706px" width="10" height="13" viewBox="0 0 10 13" shape-rendering="crispEdges"><path d="M0.5 0.5h9v8l-4.5 4-4.5-4z" fill="#f4f6f8" stroke="#5a6470" shape-rendering="geometricPrecision"/></svg>
<svg class="ab" style="left:772px;top:705px" width="16" height="16" viewBox="0 0 16 16"><circle cx="8" cy="8" r="7.2" fill="#f4f6f8" stroke="#7b8592" stroke-width="1"/><rect x="4" y="7" width="8" height="2" fill="#3a4350"/><rect x="7" y="4" width="2" height="8" fill="#3a4350"/></svg>
<svg class="ab" style="left:799px;top:714px" width="9" height="9" viewBox="0 0 9 9" shape-rendering="crispEdges"><rect x="6" y="0" width="2" height="2" fill="#aab2bc"/><rect x="3" y="3" width="2" height="2" fill="#aab2bc"/><rect x="6" y="3" width="2" height="2" fill="#aab2bc"/><rect x="0" y="6" width="2" height="2" fill="#aab2bc"/><rect x="3" y="6" width="2" height="2" fill="#aab2bc"/><rect x="6" y="6" width="2" height="2" fill="#aab2bc"/></svg>
<div class="ab" style="left:808px;top:84px;width:1px;height:641px;background:#8d98a6"></div>
<div class="ab" style="left:36px;top:84px;width:125px;height:65px;border-radius:4px;box-shadow:inset 3px 4px 5px rgba(60,70,80,.35)"></div>
<div class="ab" style="left:31px;top:79px;width:136px;height:75px;border:5px solid #ff0000;border-radius:11px;box-shadow:1px 2px 3px rgba(0,0,0,.25)"></div>
<div class="ab" style="left:40px;top:170px;width:769px;height:3px;background:#dde1e6"></div>
<div class="ab" style="left:40px;top:173px;width:769px;height:1px;background:#a3abb5"></div>
<div class="ab" style="left:40px;top:174px;width:769px;height:20px;background:#fff"></div>
<div class="t" style="left:101px;top:178.6px;font-size:11.8px;color:#000;font-weight:normal;">E25</div>
<svg class="ab" style="left:188px;top:183px" width="7" height="4" viewBox="0 0 7 4" shape-rendering="crispEdges"><path d="M0 0h7l-3.5 4z" fill="#222" shape-rendering="geometricPrecision"/></svg>
<div class="ab" style="left:201px;top:174px;width:86px;height:20px;border-left:1px solid #9aa3ae;border-right:1px solid #b8c0ca;border-radius:10px 0 0 10px;background:#dde1e7"></div>
<svg class="ab" style="left:206px;top:179px" width="10" height="10" viewBox="0 0 10 10"><defs><linearGradient id="gc" x1="0" y1="0" x2="0" y2="1"><stop offset="0" stop-color="#b9bec5"/><stop offset="1" stop-color="#eef0f2"/></linearGradient></defs><circle cx="5" cy="5" r="4" fill="url(#gc)"/></svg>
<div class="t" style="left:267.5px;top:177.5px;font-size:13px;color:#222;font-weight:normal;font-family:"Liberation Serif",serif;font-weight:bold"><i>f</i><span style="font-size:10px"><i>x</i></span></div>
<div class="ab" style="left:287px;top:174px;width:505px;height:20px;background:#fff"></div>
<div class="t" style="left:294.5px;top:178.2px;font-size:12.4px;color:#000;font-weight:normal;">15461</div>
<div class="ab" style="left:792px;top:175px;width:16px;height:18px;border:1px solid #a8b0ba;background:linear-gradient(#f4f6f8,#dde2e8)"></div>
<svg class="ab" style="left:795px;top:181px" width="9" height="6" viewBox="0 0 9 6" shape-rendering="crispEdges"><path d="M1 1l3.5 3.5L8 1" fill="none" stroke="#333" stroke-width="1.8" shape-rendering="geometricPrecision"/></svg>
<div class="ab" style="left:40px;top:194px;width:769px;height:1px;background:#a3abb5"></div>
<div class="ab" style="left:40px;top:195px;width:769px;height:3px;background:#eef2f7"></div>
<div class="ab" style="left:40px;top:198px;width:769px;height:1px;background:#a3abb5"></div>
<div class="ab" style="left:39px;top:84px;width:1px;height:640px;background:#8d98a6"></div>
</body></html>
